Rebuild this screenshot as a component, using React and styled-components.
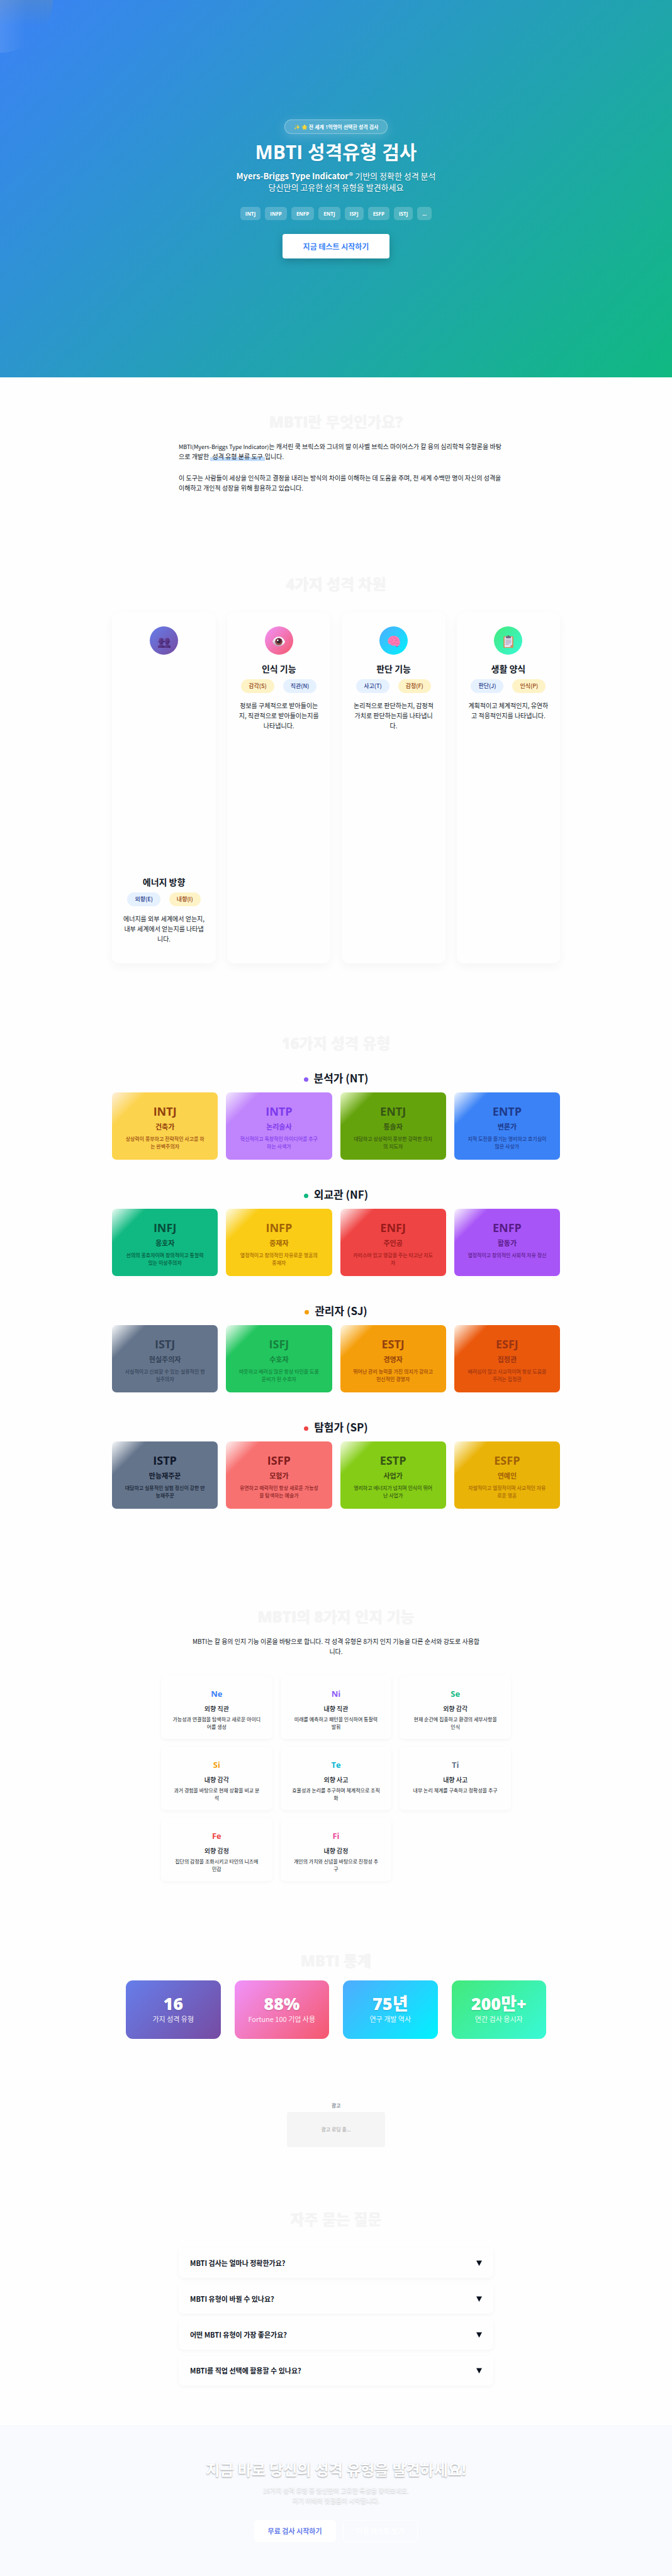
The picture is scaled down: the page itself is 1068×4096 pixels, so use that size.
import React from "react";
import styled, { createGlobalStyle, css } from "styled-components";

const latin = '"Open Sans", "Noto Sans CJK KR", sans-serif';
const korean = '"Noto Sans CJK KR", "Noto Sans", sans-serif';

const GlobalStyle = createGlobalStyle`
  *, *::before, *::after { box-sizing: border-box; }
  body { margin: 0; background: #fefefe; color: #111827; font-family: ${korean}; font-size: 10px; line-height: 16px; }
  h1, h2, h3, h4, p, ul { margin: 0; padding: 0; }
  h1, h2 { font-family: ${latin}; }
  button { font-family: inherit; cursor: pointer; }
`;

const Line = styled.span`
  display: block;
  white-space: nowrap;
`;

const lines = (list) => list.map((text) => <Line key={text}>{text}</Line>);

/* ---------- hero ---------- */

const Hero = styled.header`
  position: relative;
  display: flex;
  flex-direction: column;
  align-items: center;
  justify-content: center;
  min-height: 600px;
  color: #fff;
  text-align: center;
  background: linear-gradient(135deg, #3b82f6 0%, #10b981 100%);
`;

const HeroGlow = styled.div`
  position: absolute;
  top: 0;
  left: 0;
  width: 84px;
  height: 84px;
  border-radius: 0 0 84px 0;
  background:
    linear-gradient(to right, rgba(255, 255, 255, 0.1), transparent 50%),
    linear-gradient(to bottom, rgba(134, 150, 130, 0.22), transparent 50%);
`;

const Badge = styled.div`
  padding: 0 14px;
  border: 1px solid rgba(255, 255, 255, 0.3);
  border-radius: 11px;
  background: rgba(255, 255, 255, 0.2);
  box-shadow: 0 4px 18px rgba(255, 255, 255, 0.2);
  font-family: ${latin};
  font-size: 8px;
  font-weight: 600;
  line-height: 21px;
`;

const HeroTitle = styled.h1`
  margin: 10px 0;
  font-size: 30px;
  font-weight: 700;
  line-height: 38px;
  text-shadow: 0 1px 2px rgba(0, 0, 0, 0.1);
`;

const HeroText = styled.p`
  font-size: 13px;
  font-weight: 400;
  line-height: 18px;
  text-shadow: 0 1px 2px rgba(0, 0, 0, 0.2);

  strong { font-weight: 600; }
`;

const Chips = styled.ul`
  display: flex;
  gap: 7px;
  margin: 22px 0;
  list-style: none;
`;

const Chip = styled.li`
  padding: 0 8px;
  border-radius: 5px;
  background: rgba(255, 255, 255, 0.2);
  font-family: ${latin};
  font-size: 8px;
  font-weight: 700;
  line-height: 21px;
`;

const StartButton = styled.button`
  padding: 0 33px;
  border: 0;
  border-radius: 4px;
  background: #fff;
  color: #3b82f6;
  font-size: 12px;
  font-weight: 600;
  line-height: 39px;
  box-shadow: 0 4px 14px rgba(0, 0, 0, 0.2);
`;

/* ---------- shared sections ---------- */

const Section = styled.section`
  display: flex;
  flex-direction: column;
  align-items: center;
  padding: 56px 0 ${(p) => p.$bottom || 56}px;
`;

const SectionTitle = styled.h2`
  margin-bottom: ${(p) => (p.$tight ? 16 : 30)}px;
  color: #f4f4f4;
  font-size: 24px;
  font-weight: 800;
  line-height: 30px;
  text-align: center;
  text-shadow: 0 0 1px #f4f4f4;
`;

const Prose = styled.div`
  width: 100%;
  max-width: 500px;

  p { margin-bottom: 18px; }
`;

const Term = styled.span`
  font-size: 9px;
  line-height: 1;
`;

const Mark = styled.span`
  padding: 0 3px;
  background: linear-gradient(transparent 60%, #bfdbfe 60%);
`;

/* ---------- dimensions ---------- */

const DimensionGrid = styled.div`
  display: grid;
  grid-template-columns: repeat(4, 1fr);
  gap: 18px;
  width: 100%;
  max-width: 712px;
`;

const DimensionCard = styled.article`
  display: flex;
  flex-direction: column;
  align-items: center;
  padding: 22px 18px;
  border-radius: 11px;
  background: #fefefe;
  box-shadow: 0 5px 16px rgba(0, 0, 0, 0.04);
  text-align: center;
`;

const DimensionIcon = styled.div`
  display: flex;
  align-items: center;
  justify-content: center;
  width: 45px;
  height: 45px;
  padding-top: 2px;
  border-radius: 50%;
  background: linear-gradient(135deg, ${(p) => p.$from}, ${(p) => p.$to});

  svg { width: 20px; height: 20px; }
`;

const DimensionSpacer = styled.div`
  height: 339px;
`;

const DimensionName = styled.h3`
  margin: 12px 0 7px;
  font-size: 14px;
  font-weight: 700;
  line-height: 20px;
`;

const Pills = styled.div`
  display: flex;
  gap: 14px;
  margin-bottom: 12px;
`;

const Pill = styled.span`
  padding: 0 12px;
  border-radius: 11px;
  font-size: 9px;
  font-weight: 500;
  line-height: 22px;
  white-space: nowrap;
  ${(p) =>
    p.$warm
      ? css`background: #fef3c7; color: #92400e;`
      : css`background: #e6f1ff; color: #1e3a8a;`}
`;

const DimensionText = styled.p`
  display: flex;
  flex-direction: column;
  align-items: center;
  margin-bottom: 9px;
`;

/* ---------- types ---------- */

const Group = styled.div`
  width: 100%;
  max-width: 712px;
  margin-bottom: 45px;
`;

const GroupTitle = styled.h3`
  display: flex;
  align-items: center;
  justify-content: center;
  gap: 9px;
  margin-bottom: 13px;
  font-size: 17px;
  font-weight: 700;
  line-height: 20px;

  &::before {
    content: "";
    width: 7px;
    height: 7px;
    margin-top: 4px;
    border-radius: 50%;
    background: ${(p) => p.$dot};
  }
`;

const TypeGrid = styled.div`
  display: grid;
  grid-template-columns: repeat(4, 1fr);
  gap: 13px;
`;

const TypeCard = styled.article`
  display: flex;
  flex-direction: column;
  align-items: center;
  padding: 18px 9px 15px;
  border-radius: 7px;
  background: linear-gradient(135deg, ${(p) => p.$light} 0%, ${(p) => p.$fill} 20%);
  color: ${(p) => p.$ink};
  text-align: center;
`;

const TypeCode = styled.h4`
  font-family: ${latin};
  font-size: 18px;
  font-weight: 700;
  line-height: 24px;
`;

const TypeRole = styled.p`
  margin: 5px 0 7px;
  font-size: 11px;
  font-weight: 600;
  line-height: 14px;
`;

const TypeText = styled.p`
  font-size: 8px;
  font-weight: 500;
  line-height: 12px;
  opacity: 0.9;
`;

/* ---------- functions ---------- */

const Lead = styled.p`
  margin-bottom: 30px;
  text-align: center;
`;

const FunctionGrid = styled.div`
  display: grid;
  grid-template-columns: repeat(3, 1fr);
  gap: 12px 13px;
  width: 100%;
  max-width: 556px;
`;

const FunctionCard = styled.article`
  display: flex;
  flex-direction: column;
  align-items: center;
  padding: 18px 9px 13px;
  border-radius: 7px;
  background: #fefefe;
  box-shadow: 0 2px 6px rgba(0, 0, 0, 0.04);
  text-align: center;
`;

const FunctionCode = styled.h3`
  color: ${(p) => p.$ink};
  font-family: ${latin};
  font-size: 13px;
  font-weight: 700;
  line-height: 22px;
`;

const FunctionName = styled.h4`
  margin: 5px 0 3px;
  font-size: 10px;
  font-weight: 500;
  line-height: 16px;
`;

const FunctionText = styled.p`
  font-size: 8px;
  line-height: 12px;
`;

/* ---------- stats ---------- */

const StatGrid = styled.div`
  display: grid;
  grid-template-columns: repeat(4, 1fr);
  gap: 22px;
  width: 100%;
  max-width: 668px;
`;

const StatCard = styled.article`
  padding: 22px 0 24px;
  border-radius: 11px;
  background: linear-gradient(135deg, ${(p) => p.$from}, ${(p) => p.$to});
  color: #fff;
  text-align: center;
`;

const StatValue = styled.p`
  font-family: ${latin};
  font-size: 27px;
  font-weight: 800;
  line-height: 30px;
  text-shadow: 0 1px 2px rgba(0, 0, 0, 0.2);
`;

const StatLabel = styled.p`
  margin-top: 1px;
  font-size: 11px;
  font-weight: 400;
  line-height: 16px;
  opacity: 0.9;
`;

/* ---------- ad ---------- */

const Ad = styled.aside`
  display: flex;
  flex-direction: column;
  align-items: center;
  gap: 4px;
  padding: 44px 0;
  color: #4b5563;
  font-size: 8px;
  line-height: 12px;
`;

const AdBox = styled.div`
  width: 156px;
  border-radius: 4px;
  background: #f5f5f5;
  color: #999;
  line-height: 56px;
  text-align: center;
`;

/* ---------- faq ---------- */

const FaqList = styled.div`
  display: flex;
  flex-direction: column;
  gap: 9px;
  width: 100%;
  max-width: 500px;
  margin-bottom: 9px;
`;

const FaqButton = styled.button`
  display: flex;
  align-items: center;
  justify-content: space-between;
  height: 48px;
  padding: 0 18px;
  border: 0;
  border-radius: 7px;
  background: #fefefe;
  box-shadow: 0 2px 6px rgba(0, 0, 0, 0.04);
  color: #111827;
  font-size: 11px;
  font-weight: 600;
  line-height: 16px;

  svg { width: 9px; height: 9px; }
`;

/* ---------- call to action ---------- */

const Cta = styled.footer`
  display: flex;
  flex-direction: column;
  align-items: center;
  padding: 56px 0 54px;
  background: #f8fafe;
  color: #fff;
  text-align: center;
`;

const CtaTitle = styled.h2`
  font-size: 24px;
  font-weight: 700;
  line-height: 30px;
  text-shadow: 0 1px 2px rgba(0, 0, 0, 0.4);
`;

const CtaText = styled.p`
  margin: 10px 0 23px;
  text-shadow: 0 1px 2px rgba(0, 0, 0, 0.3);
`;

const CtaActions = styled.div`
  display: flex;
  gap: 11px;
`;

const CtaButton = styled.button`
  padding: 0 21px;
  border: 1px solid #fff;
  border-radius: 5px;
  background: ${(p) => (p.$solid ? "#fff" : "transparent")};
  color: ${(p) => (p.$solid ? "#667eea" : "#fff")};
  font-size: 11px;
  font-weight: 600;
  line-height: 33px;
`;

/* ---------- drawings ---------- */

const PeopleIcon = () => (
  <svg viewBox="0 0 36 36" aria-hidden="true">
    <defs>
      <linearGradient id="bust" x1="0" y1="0" x2="1" y2="1">
        <stop offset="0" stopColor="#6b449c" />
        <stop offset="1" stopColor="#43246f" />
      </linearGradient>
    </defs>
    <g fill="url(#bust)">
      <path d="M0 36v-3c0-4 4-6 9-6s9 2 9 6v3z" />
      <path d="M18 36v-3c0-4 4-6 9-6s9 2 9 6v3z" />
      <path d="M3 13c0-4 2-5 6.500-5s6.500 1 6.500 5v6c0 5-3 8-6.500 8S3 24 3 19z" />
      <path d="M20 13c0-4 2-5 6.500-5s6.500 1 6.500 5v6c0 5-3 8-6.500 8S20 24 20 19z" />
    </g>
    <g fill="#3a1d62">
      <circle cx="2.300" cy="18" r="1.500" />
      <circle cx="18" cy="18" r="1.800" />
      <circle cx="33.700" cy="18" r="1.500" />
    </g>
  </svg>
);

const EyeIcon = () => (
  <svg viewBox="0 0 36 36" aria-hidden="true">
    <defs>
      <linearGradient id="sclera" x1="0.700" y1="0" x2="0.300" y2="1">
        <stop offset="0.500" stopColor="#f3f1f5" />
        <stop offset="1" stopColor="#a99bb8" />
      </linearGradient>
      <linearGradient id="iris" x1="0.600" y1="0" x2="0.400" y2="1">
        <stop offset="0" stopColor="#5a1230" />
        <stop offset="1" stopColor="#a8604f" />
      </linearGradient>
    </defs>
    <path d="M0 19C3 9 10 4 18 4s15 5 18 15c-3 8-10 13-18 13S3 27 0 19z" fill="url(#sclera)" />
    <circle cx="18" cy="18.500" r="10.500" fill="url(#iris)" />
    <circle cx="18" cy="18" r="5.500" fill="#33222d" />
    <circle cx="15" cy="14.500" r="2.500" fill="#fff" />
  </svg>
);

const BrainIcon = () => (
  <svg viewBox="0 0 36 36" aria-hidden="true">
    <path d="M23 28h5l1 6-4-1z" fill="#e0389b" />
    <path
      d="M1 20C-1 12 5 3 16 2c11-1 18 6 19 15 1 6 0 12-5 13-5 2-9-1-13 0C11 31 9 26 9 26 4 27 2 24 1 20z"
      fill="#ff7db4"
    />
    <path
      d="M9 26c5 0 6-4 11-4s7 3 13 2M8 9c4 0 7 3 6 8M17 3c-1 4 2 6 5 6s6 3 5 7M4 18c4-2 7 0 8 3M20 15c3 0 5 2 8 3"
      fill="none"
      stroke="#e2579a"
      strokeWidth="1.500"
    />
  </svg>
);

const ClipboardIcon = () => (
  <svg viewBox="0 0 36 36" aria-hidden="true">
    <rect x="4" y="3" width="28" height="33" rx="2" fill="#d98a52" />
    <path d="M7 5h22v22l-6 7H7z" fill="#e6e0f0" />
    <path d="M23 34v-5l6-2z" fill="#b3a6c4" />
    <path d="M11 3h4a3 3 0 0 1 6 0h4v6H11z" fill="#77697f" />
    <path d="M10 14h16M10 18h16M10 22h16M10 26h9" stroke="#8d7f9c" strokeWidth="1.400" />
  </svg>
);

const Arrow = () => (
  <svg viewBox="0 0 9 9" aria-hidden="true">
    <path d="M0 0.500h9L4.500 9z" fill="#0b1220" />
  </svg>
);

/* ---------- content ---------- */

const chips = ["INTJ", "INFP", "ENFP", "ENTJ", "ISFJ", "ESFP", "ISTJ", "..."];

const dimensions = [
  {
    name: "에너지 방향", Icon: PeopleIcon, from: "#667eea", to: "#764ba2", spaced: true,
    pills: [["외향(E)", false], ["내향(I)", true]],
    text: ["에너지를 외부 세계에서 얻는지,", "내부 세계에서 얻는지를 나타냅", "니다."],
  },
  {
    name: "인식 기능", Icon: EyeIcon, from: "#f093fb", to: "#f5576c",
    pills: [["감각(S)", true], ["직관(N)", false]],
    text: ["정보를 구체적으로 받아들이는", "지, 직관적으로 받아들이는지를", "나타냅니다."],
  },
  {
    name: "판단 기능", Icon: BrainIcon, from: "#4facfe", to: "#00f2fe",
    pills: [["사고(T)", false], ["감정(F)", true]],
    text: ["논리적으로 판단하는지, 감정적", "가치로 판단하는지를 나타냅니", "다."],
  },
  {
    name: "생활 양식", Icon: ClipboardIcon, from: "#43e97b", to: "#38f9d7",
    pills: [["판단(J)", false], ["인식(P)", true]],
    text: ["계획적이고 체계적인지, 유연하", "고 적응적인지를 나타냅니다."],
  },
];

const groups = [
  {
    title: "분석가 (NT)", dot: "#8b5cf6",
    types: [
      ["INTJ", "건축가", ["상상력이 풍부하고 전략적인 사고를 하", "는 완벽주의자"], "#fef0dc", "#fcd34d", "#92400e"],
      ["INTP", "논리술사", ["혁신적이고 독창적인 아이디어를 추구", "하는 사색가"], "#f3e8ff", "#c084fc", "#7c3aed"],
      ["ENTJ", "통솔자", ["대담하고 상상력이 풍부한 강력한 의지", "의 지도자"], "#ecfccb", "#65a30d", "#365314"],
      ["ENTP", "변론가", ["지적 도전을 즐기는 영리하고 호기심이", "많은 사상가"], "#eff6ff", "#3b82f6", "#1e3a8a"],
    ],
  },
  {
    title: "외교관 (NF)", dot: "#10b981",
    types: [
      ["INFJ", "옹호자", ["선의의 옹호자이며 창의적이고 통찰력", "있는 이상주의자"], "#ecfdf5", "#10b981", "#064e3b"],
      ["INFP", "중재자", ["열정적이고 창의적인 자유로운 영혼의", "중재자"], "#fefce8", "#facc15", "#a16207"],
      ["ENFJ", "주인공", ["카리스마 있고 영감을 주는 타고난 지도", "자"], "#fef2f2", "#ef4444", "#991b1b"],
      ["ENFP", "활동가", ["열정적이고 창의적인 사회적 자유 정신"], "#faf5ff", "#a855f7", "#581c87"],
    ],
  },
  {
    title: "관리자 (SJ)", dot: "#f59e0b",
    types: [
      ["ISTJ", "현실주의자", ["사실적이고 신뢰할 수 있는 실용적인 현", "실주의자"], "#f8fafc", "#64748b", "#334155"],
      ["ISFJ", "수호자", ["따뜻하고 배려심 많은 항상 타인을 도울", "준비가 된 수호자"], "#f0fdf4", "#22c55e", "#15803d"],
      ["ESTJ", "경영자", ["뛰어난 관리 능력을 가진 의지가 강하고", "헌신적인 경영자"], "#fffbeb", "#f59e0b", "#92400e"],
      ["ESFJ", "집정관", ["배려심이 많고 사교적이며 항상 도움을", "주려는 집정관"], "#fff7ed", "#ea580c", "#9a3412"],
    ],
  },
  {
    title: "탐험가 (SP)", dot: "#ef4444",
    types: [
      ["ISTP", "만능재주꾼", ["대담하고 실용적인 실험 정신이 강한 만", "능재주꾼"], "#f8fafc", "#64748b", "#0f172a"],
      ["ISFP", "모험가", ["유연하고 매력적인 항상 새로운 가능성", "을 탐색하는 예술가"], "#fef2f2", "#f87171", "#7f1d1d"],
      ["ESTP", "사업가", ["영리하고 에너지가 넘치며 인식이 뛰어", "난 사업가"], "#f7fee7", "#84cc16", "#365314"],
      ["ESFP", "연예인", ["자발적이고 열정적이며 사교적인 자유", "로운 영혼"], "#fefce8", "#eab308", "#a16207"],
    ],
  },
];

const functions = [
  ["Ne", "외향 직관", ["가능성과 연결점을 탐색하고 새로운 아이디", "어를 생성"], "#3b82f6"],
  ["Ni", "내향 직관", ["미래를 예측하고 패턴을 인식하여 통찰력", "발휘"], "#8b5cf6"],
  ["Se", "외향 감각", ["현재 순간에 집중하고 환경의 세부사항을", "인식"], "#10b981"],
  ["Si", "내향 감각", ["과거 경험을 바탕으로 현재 상황을 비교 분", "석"], "#f59e0b"],
  ["Te", "외향 사고", ["효율성과 논리를 추구하며 체계적으로 조직", "화"], "#06b6d4"],
  ["Ti", "내향 사고", ["내부 논리 체계를 구축하고 정확성을 추구"], "#64748b"],
  ["Fe", "외향 감정", ["집단의 감정을 조화시키고 타인의 니즈에", "민감"], "#ef4444"],
  ["Fi", "내향 감정", ["개인의 가치와 신념을 바탕으로 진정성 추", "구"], "#ec4899"],
];

const stats = [
  ["16", "가지 성격 유형", "#667eea", "#764ba2"],
  ["88%", "Fortune 100 기업 사용", "#f093fb", "#f5576c"],
  ["75년", "연구 개발 역사", "#4facfe", "#00f2fe"],
  ["200만+", "연간 검사 응시자", "#43e97b", "#38f9d7"],
];

const questions = [
  "MBTI 검사는 얼마나 정확한가요?",
  "MBTI 유형이 바뀔 수 있나요?",
  "어떤 MBTI 유형이 가장 좋은가요?",
  "MBTI를 직업 선택에 활용할 수 있나요?",
];

export default function App() {
  return (
    <>
      <GlobalStyle />
      <Hero>
        <HeroGlow />
        <Badge>✨ 🌟 전 세계 1억명이 선택한 성격 검사</Badge>
        <HeroTitle>MBTI 성격유형 검사</HeroTitle>
        <HeroText>
          <strong>Myers-Briggs Type Indicator®</strong> 기반의 정확한 성격 분석
          <br />
          당신만의 고유한 성격 유형을 발견하세요
        </HeroText>
        <Chips>{chips.map((c) => <Chip key={c}>{c}</Chip>)}</Chips>
        <StartButton type="button">지금 테스트 시작하기</StartButton>
      </Hero>

      <main>
        <Section>
          <SectionTitle $tight>MBTI란 무엇인가요?</SectionTitle>
          <Prose>
            <p>
              <Line>
                <Term>MBTI(Myers-Briggs Type Indicator)</Term>는 캐서린 쿡 브릭스와 그녀의 딸 이사벨 브릭스 마이어스가 칼 융의 심리학적 유형론을 바탕
              </Line>
              <Line>으로 개발한 <Mark>성격 유형 분류 도구</Mark>입니다.</Line>
            </p>
            <p>
              {lines([
                "이 도구는 사람들이 세상을 인식하고 결정을 내리는 방식의 차이를 이해하는 데 도움을 주며, 전 세계 수백만 명이 자신의 성격을",
                "이해하고 개인적 성장을 위해 활용하고 있습니다.",
              ])}
            </p>
          </Prose>
        </Section>

        <Section>
          <SectionTitle>4가지 성격 차원</SectionTitle>
          <DimensionGrid>
            {dimensions.map(({ name, Icon, from, to, spaced, pills, text }) => (
              <DimensionCard key={name}>
                <DimensionIcon $from={from} $to={to}><Icon /></DimensionIcon>
                {spaced && <DimensionSpacer />}
                <DimensionName>{name}</DimensionName>
                <Pills>{pills.map(([label, warm]) => <Pill key={label} $warm={warm}>{label}</Pill>)}</Pills>
                <DimensionText>{lines(text)}</DimensionText>
              </DimensionCard>
            ))}
          </DimensionGrid>
        </Section>

        <Section>
          <SectionTitle>16가지 성격 유형</SectionTitle>
          {groups.map(({ title, dot, types }) => (
            <Group key={title}>
              <GroupTitle $dot={dot}>{title}</GroupTitle>
              <TypeGrid>
                {types.map(([code, role, text, light, fill, ink]) => (
                  <TypeCard key={code} $light={light} $fill={fill} $ink={ink}>
                    <TypeCode>{code}</TypeCode>
                    <TypeRole>{role}</TypeRole>
                    <TypeText>{lines(text)}</TypeText>
                  </TypeCard>
                ))}
              </TypeGrid>
            </Group>
          ))}
        </Section>

        <Section>
          <SectionTitle $tight>MBTI의 8가지 인지 기능</SectionTitle>
          <Lead>
            {lines([
              "MBTI는 칼 융의 인지 기능 이론을 바탕으로 합니다. 각 성격 유형은 8가지 인지 기능을 다른 순서와 강도로 사용합",
              "니다.",
            ])}
          </Lead>
          <FunctionGrid>
            {functions.map(([code, name, text, ink]) => (
              <FunctionCard key={code}>
                <FunctionCode $ink={ink}>{code}</FunctionCode>
                <FunctionName>{name}</FunctionName>
                <FunctionText>{lines(text)}</FunctionText>
              </FunctionCard>
            ))}
          </FunctionGrid>
        </Section>

        <Section>
          <SectionTitle $tight>MBTI 통계</SectionTitle>
          <StatGrid>
            {stats.map(([value, label, from, to]) => (
              <StatCard key={value} $from={from} $to={to}>
                <StatValue>{value}</StatValue>
                <StatLabel>{label}</StatLabel>
              </StatCard>
            ))}
          </StatGrid>
        </Section>

        <Ad>
          <span>광고</span>
          <AdBox>광고 로딩 중...</AdBox>
        </Ad>

        <Section $bottom={54}>
          <SectionTitle>자주 묻는 질문</SectionTitle>
          <FaqList>
            {questions.map((q) => (
              <FaqButton key={q} type="button" aria-expanded="false">
                {q}
                <Arrow />
              </FaqButton>
            ))}
          </FaqList>
        </Section>
      </main>

      <Cta>
        <CtaTitle>지금 바로 당신의 성격 유형을 발견하세요!</CtaTitle>
        <CtaText>
          16가지 성격 유형 중 당신만의 고유한 특성을 찾아보세요.
          <br />
          자기 이해의 첫걸음이 시작됩니다.
        </CtaText>
        <CtaActions>
          <CtaButton type="button" $solid>무료 검사 시작하기</CtaButton>
          <CtaButton type="button">다른 테스트 보기</CtaButton>
        </CtaActions>
      </Cta>
    </>
  );
}
